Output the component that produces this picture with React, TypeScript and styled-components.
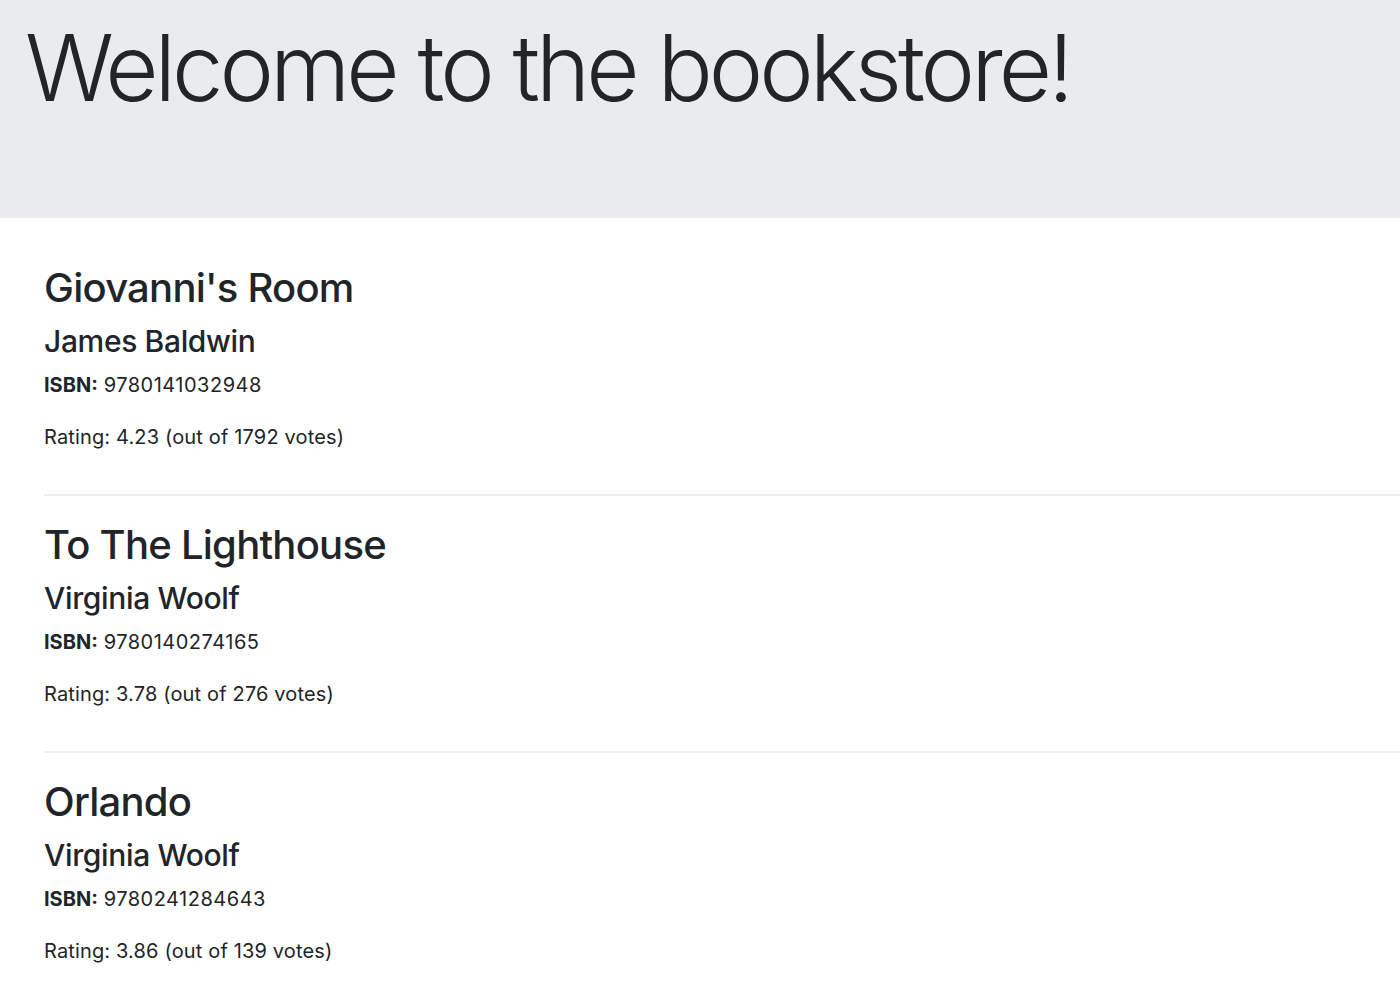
import React from "react";
import styled, { createGlobalStyle } from "styled-components";

const GlobalStyle = createGlobalStyle`
  html, body {
    margin: 0;
    padding: 0;
    background: #ffffff;
    color: #212529;
    font-family: Inter, "Noto Sans", sans-serif;
  }
`;

const Jumbotron = styled.header`
  background: #e9ecef;
  height: 218px;
  box-sizing: border-box;
  padding: 13px 25px 0;
`;

const Display = styled.h1`
  margin: 0;
  font-size: 92px;
  line-height: 1.2;
  font-weight: 300;
  letter-spacing: -4px;
  white-space: nowrap;
`;

const List = styled.main`
  padding: 46px 0 0 44px;
  display: flex;
  flex-direction: column;
`;

const Book = styled.section`
  display: flex;
  flex-direction: column;
`;

const Title = styled.h2`
  margin: 0 0 11px;
  font-size: 40px;
  line-height: 48px;
  font-weight: 500;
  letter-spacing: -0.75px;
`;

const Author = styled.h4`
  margin: 0 0 11px;
  font-size: 30px;
  line-height: 36px;
  font-weight: 500;
  letter-spacing: -0.35px;
`;

const Line = styled.p<{ $gap: number }>`
  margin: 0 0 ${(p) => p.$gap}px;
  font-size: 20px;
  line-height: 30px;
  font-weight: 400;
  letter-spacing: 0.15px;
`;

const Label = styled.strong`
  font-weight: 700;
  letter-spacing: 0;
`;

const Isbn = styled.span`
  letter-spacing: 0.5px;
`;

const Rule = styled.hr`
  border: 0;
  border-top: 2px solid #eceef0;
  margin: 0 0 25px;
`;

const books = [
  { title: "Giovanni's Room", author: "James Baldwin", isbn: "9780141032948", rating: "4.23", votes: 1792 },
  { title: "To The Lighthouse", author: "Virginia Woolf", isbn: "9780140274165", rating: "3.78", votes: 276 },
  { title: "Orlando", author: "Virginia Woolf", isbn: "9780241284643", rating: "3.86", votes: 139 },
];

export default function App() {
  return (
    <>
      <GlobalStyle />
      <Jumbotron>
        <Display>Welcome to the bookstore!</Display>
      </Jumbotron>
      <List>
        {books.map((b, i) => (
          <Book key={b.isbn}>
            <Title>{b.title}</Title>
            <Author>{b.author}</Author>
            <Line $gap={22}>
              <Label>ISBN:</Label> <Isbn>{b.isbn}</Isbn>
            </Line>
            <Line $gap={42}>
              Rating: {b.rating} (out of {b.votes} votes)
            </Line>
            {i < books.length - 1 && <Rule />}
          </Book>
        ))}
      </List>
    </>
  );
}
